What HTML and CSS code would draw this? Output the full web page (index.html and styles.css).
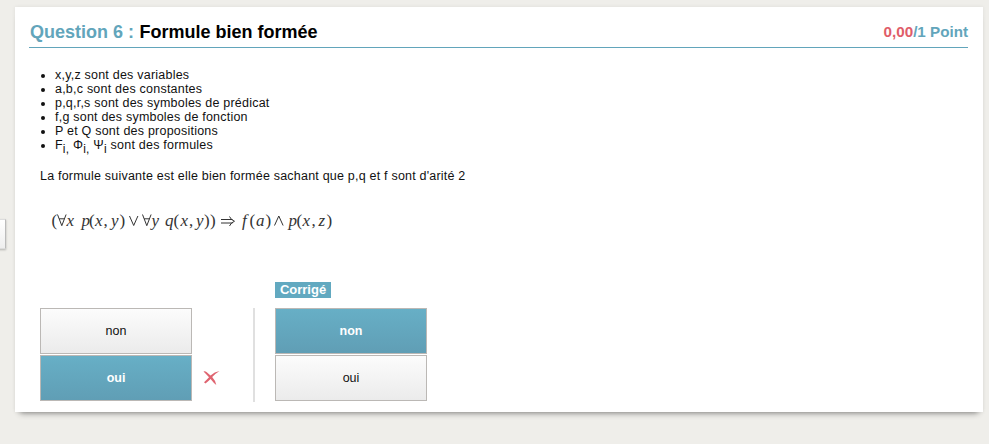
FILE: index.html
```html
<!DOCTYPE html>
<html lang="fr">
<head>
<meta charset="utf-8">
<title>Question 6</title>
<link rel="stylesheet" href="styles.css">
</head>
<body>
<div class="side-tab"></div>
<main class="card">
  <header class="head">
    <h1 class="title"><span class="num">Question 6 :</span> <span class="name">Formule bien formée</span></h1>
    <div class="score"><span class="got">0,00</span>/1 Point</div>
  </header>
  <ul class="list">
    <li>x,y,z sont des variables</li>
    <li>a,b,c sont des constantes</li>
    <li>p,q,r,s sont des symboles de prédicat</li>
    <li>f,g sont des symboles de fonction</li>
    <li>P et Q sont des propositions</li>
    <li>F<sub>i,</sub> Φ<sub>i,</sub> Ψ<sub>i</sub> sont des formules</li>
  </ul>
  <p class="ask">La formule suivante est elle bien formée sachant que p,q et f sont d'arité 2</p>
  <svg class="formula" width="300" height="30" viewBox="40 205 300 30">
    <text class="math" y="225.500"><tspan x="51.500">(</tspan><tspan class="var" x="66.500">x</tspan><tspan class="var" x="81.500">p</tspan><tspan x="89">(</tspan><tspan class="var" x="95">x</tspan><tspan x="103.500">,</tspan><tspan class="var" x="111">y</tspan><tspan x="119.500">)</tspan><tspan class="var" x="151.500">y</tspan><tspan class="var" x="165">q</tspan><tspan x="173.500">(</tspan><tspan class="var" x="180.500">x</tspan><tspan x="189">,</tspan><tspan class="var" x="196">y</tspan><tspan x="204">)</tspan><tspan x="210">)</tspan><tspan class="var" x="242">f</tspan><tspan x="249.500">(</tspan><tspan class="var" x="256">a</tspan><tspan x="265.500">)</tspan><tspan class="var" x="288.500">p</tspan><tspan x="296.500">(</tspan><tspan class="var" x="302.500">x</tspan><tspan x="311.500">,</tspan><tspan class="var" x="318.500">z</tspan><tspan x="326.500">)</tspan></text>
    <g class="signs">
      <path d="M57.500 214.500l4.300 11.200 4.300-11.200M59.200 218.800h5.200M129.500 216l4.200 9.500 4.200-9.500M142.500 214.500l4.300 11.200 4.300-11.200M144.200 218.800h5.200M274.500 225.500l4.300-9.500 4.300 9.500M221 219.500h11.500M221 223h11.500M229.500 216.500q1.500 3.500 5 4.750q-3.500 1.250-5 4.750"/>
    </g>
  </svg>
  <section class="answers">
    <div class="column given">
      <div class="row"><div class="choice">non</div></div>
      <div class="row"><div class="choice on">oui</div>
        <svg class="cross" width="17" height="16" viewBox="0 0 17 16"><path d="M.5 1.500Q2 .8 3.500 2Q5.500 3.500 7.500 5.500Q11.500 1.800 16.500 1Q12.500 3.500 9.200 7Q12.500 10.500 13.300 15Q11 13.500 7.600 9Q5 11.500 2.500 13.600L1 12.300Q3.500 10 6 7.300Q3 4 .5 1.500Z"/></svg>
      </div>
    </div>
    <div class="column fixed">
      <div class="label">Corrigé</div>
      <div class="row"><div class="choice on">non</div></div>
      <div class="row"><div class="choice">oui</div></div>
    </div>
  </section>
</main>
</body>
</html>
```
FILE: styles.css
```css
* { box-sizing: border-box; }
body {
  margin: 0;
  height: 444px;
  overflow: hidden;
  background: #efeeea;
  color: #111;
  font: 12.5px/14px "Liberation Sans", Arial, sans-serif;
}
.side-tab {
  position: absolute;
  left: -10px;
  top: 219px;
  width: 16px;
  height: 30px;
  background: linear-gradient(#fff, #eee);
  border: 1px solid #ddd;
  border-right-color: #bbb;
  box-shadow: 0 1px 2px rgba(0, 0, 0, .25);
}
.card {
  width: 968px;
  height: 405px;
  margin: 7px 0 0 15px;
  padding: 11px 15px 0 14px;
  background: #fff;
  box-shadow: 0 0 4px rgba(0, 0, 0, .07), 0 6px 6px -5px rgba(0, 0, 0, .45);
}
.head {
  display: flex;
  justify-content: space-between;
  height: 30px;
  border-bottom: 1px solid #62a5bb;
  font-weight: bold;
  color: #62a5bb;
}
.title {
  margin: 0;
  padding-left: 1px;
  font-size: 18px;
  line-height: 29px;
  display: flex;
  gap: 5.5px;
}
.name { color: #000; }
.score { font-size: 15.2px; line-height: 28px; }
.got { color: #df5d69; }
.list {
  margin: 20px 0 0 11px;
  padding: 0 0 0 15px;
  letter-spacing: .22px;
}
.list li { height: 14px; }
.list sub { line-height: 0; font-size: 12px; }
.ask { margin: 17px 0 0 11px; line-height: 14px; letter-spacing: .21px; }
.formula { display: block; margin: 22px 0 0 11px; }
.math { font: 17px "Liberation Serif", serif; fill: #333; }
.var { font-style: italic; }
.signs path { fill: none; stroke: #333; stroke-width: 1; }
.answers { display: flex; margin: 47px 0 0 11px; }
.given { width: 215px; height: 94px; margin-top: 26px; border-right: 2px solid #e0e0e0; }
.fixed { margin-left: 20px; }
.label {
  width: 56px;
  height: 16px;
  margin-bottom: 10px;
  background: #62a9c0;
  color: #fff;
  font-weight: bold;
  font-size: 13px;
  line-height: 16px;
  text-align: center;
}
.row { display: flex; align-items: center; height: 46px; margin-bottom: 1px; }
.choice {
  width: 152px;
  height: 46px;
  border: 1px solid #bbb8b5;
  background: linear-gradient(#fcfcfc, #ebebeb);
  line-height: 44px;
  text-align: center;
}
.choice.on {
  background: linear-gradient(#67afc6, #609eb5);
  color: #fff;
  font-weight: bold;
}
.cross { margin-left: 11px; fill: #df6470; }
```
